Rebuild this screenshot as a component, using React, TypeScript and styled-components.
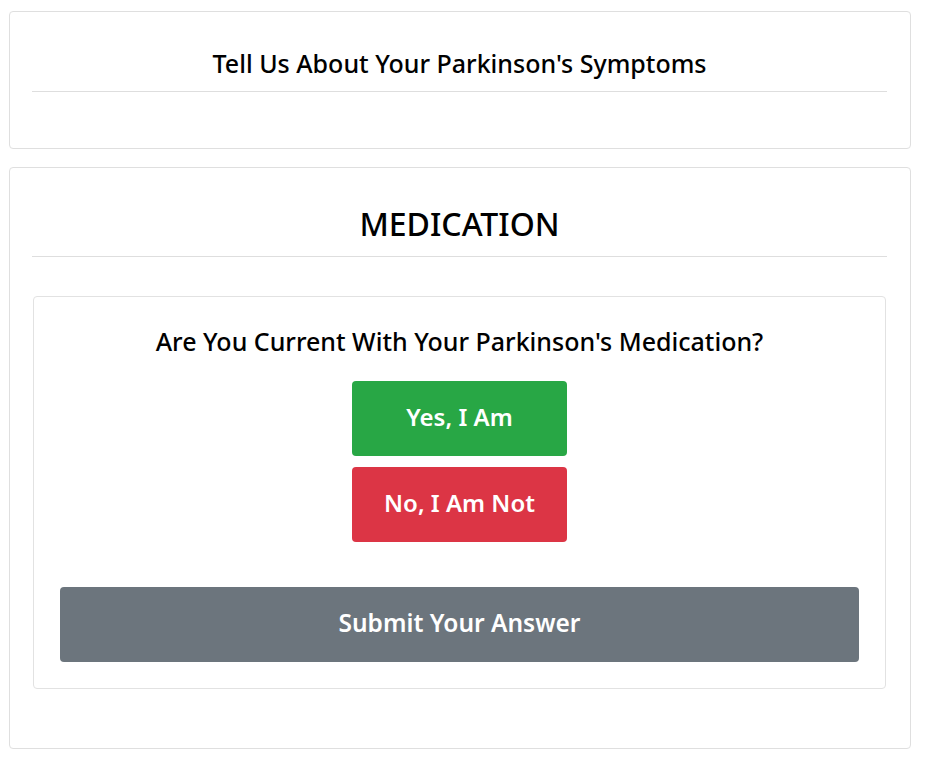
import React from "react";
import styled, { createGlobalStyle } from "styled-components";

const Global = createGlobalStyle`
  html, body { margin: 0; padding: 0; background: #fff; }
  body { font-family: "Noto Sans", "Open Sans", sans-serif; color: #000; }
  * { box-sizing: border-box; }
`;

const Page = styled.div`
  display: flex;
  flex-direction: column;
  gap: 18px;
  padding: 11px 14px 14px 9px;
`;

const Card = styled.section<{ $pad: string }>`
  border: 1px solid #dfdfdf;
  border-radius: 4px;
  background: #fff;
  padding: ${(p) => p.$pad};
  display: flex;
  flex-direction: column;
`;

const Title = styled.h2<{ $size: number }>`
  margin: 0;
  text-align: center;
  font-size: ${(p) => p.$size}px;
  font-weight: 500;
  line-height: 1.2;
`;

const Rule = styled.hr<{ $top: number; $bottom: number }>`
  border: 0;
  border-top: 1px solid #dedede;
  margin: ${(p) => p.$top}px 0 ${(p) => p.$bottom}px;
`;

const InnerCard = styled.div`
  border: 1px solid #e2e2e2;
  border-radius: 4px;
  margin: 0 1px;
  padding: 29px 26px 26px;
  display: flex;
  flex-direction: column;
  align-items: center;
`;

const Question = styled.h3`
  margin: 0 0 25px;
  font-size: 25px;
  font-weight: 500;
  line-height: 1.2;
  text-align: center;
`;

const Choices = styled.div`
  display: flex;
  flex-direction: column;
  gap: 11px;
  margin-bottom: 45px;
`;

const Button = styled.button<{ $bg: string; $wide?: boolean }>`
  font-family: inherit;
  background: ${(p) => p.$bg};
  color: #fff;
  border: 0;
  border-radius: 4px;
  height: 75px;
  padding: 0 0 4px;
  width: ${(p) => (p.$wide ? "100%" : "215px")};
  font-size: ${(p) => (p.$wide ? 24.5 : 24)}px;
  font-weight: 600;
  cursor: pointer;
`;

export default function App() {
  return (
    <>
      <Global />
      <Page>
        <Card $pad="36px 23px 56px 22px">
          <Title $size={25}>Tell Us About Your Parkinson's Symptoms</Title>
          <Rule $top={13} $bottom={0} />
        </Card>
        <Card $pad="37px 23px 59px 22px">
          <Title $size={32}>MEDICATION</Title>
          <Rule $top={13} $bottom={39} />
          <InnerCard>
            <Question>Are You Current With Your Parkinson's Medication?</Question>
            <Choices>
              <Button $bg="#28a745">Yes, I Am</Button>
              <Button $bg="#dc3545">No, I Am Not</Button>
            </Choices>
            <Button $bg="#6c757d" $wide>
              Submit Your Answer
            </Button>
          </InnerCard>
        </Card>
      </Page>
    </>
  );
}
